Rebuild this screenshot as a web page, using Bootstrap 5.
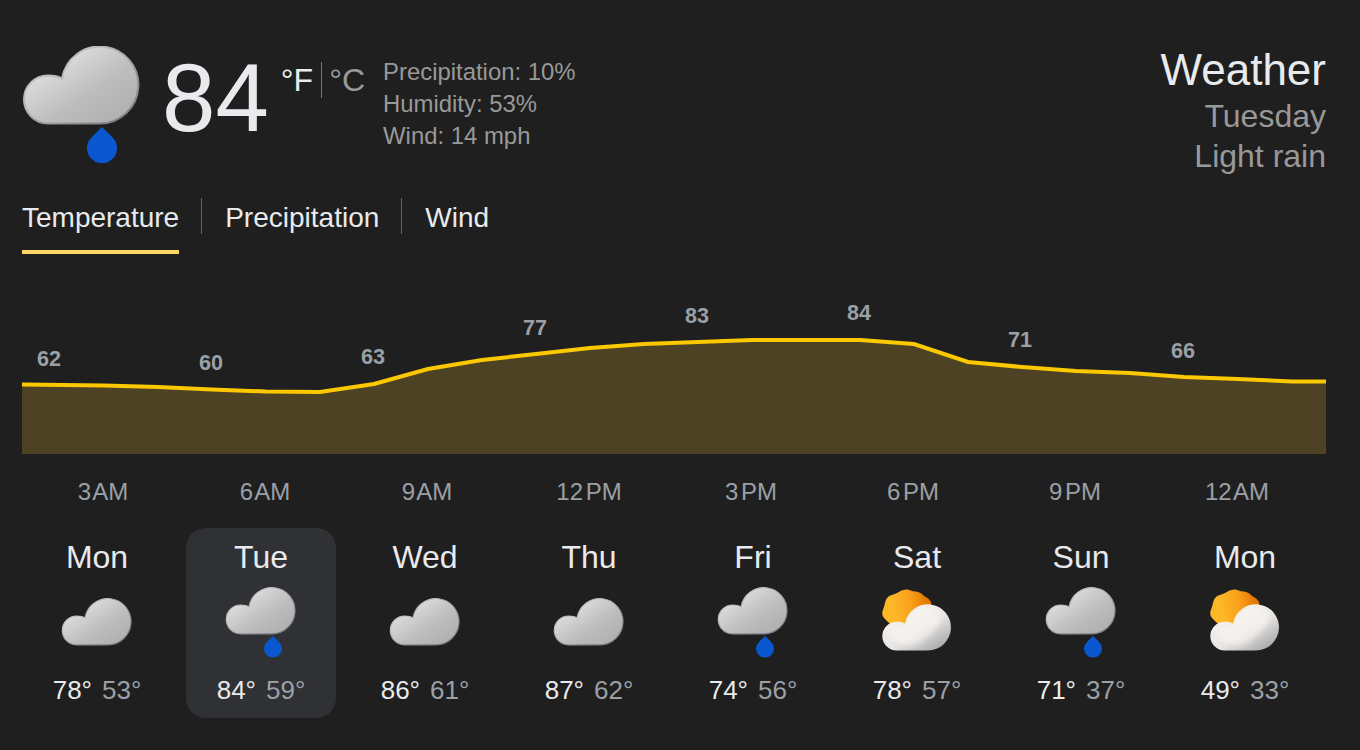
<!DOCTYPE html>
<html lang="en">
<head>
<meta charset="utf-8">
<title>Weather</title>
<link href="https://cdn.jsdelivr.net/npm/bootstrap@5.3.0/dist/css/bootstrap.min.css" rel="stylesheet">
<style>
html,body{height:100%;}
body{background:#1f1f1f;color:#e8eaed;font-family:"Liberation Sans",Arial,sans-serif;overflow:hidden;}
.wx-page{width:1360px;height:750px;padding:46px 34px 0 22px;}
.wx-head{height:116px;}
.wx-bigicon{width:118px;height:118px;display:block;flex:none;}
.wx-now{font-size:96px;line-height:102px;margin:1px 12px 0 22px;color:#e8eaed;height:102px;}
.wx-units{font-size:32px;line-height:36px;margin-top:16px;height:36px;}
.wx-units .wx-f{color:#e8eaed;padding-right:8px;border-right:1px solid #70757a;}
.wx-units .wx-c{color:#999;padding-left:7px;}
.wx-details{font-size:23.9px;line-height:32px;color:#999;margin:10px 0 0 18px;}
.wx-title{font-size:44px;line-height:48px;color:#e8eaed;margin:0;font-weight:400;}
.wx-sub{font-size:32px;line-height:40px;color:#999;}
.wx-sub1{margin-top:2px;}
.wx-tabs{margin-top:36px;height:56px;}
.wx-tab{font-size:28px;line-height:36px;color:#e8eaed;padding:2px 0 14px;text-decoration:none;border-bottom:4px solid transparent;height:56px;display:block;}
.wx-tab.wx-on{border-bottom-color:#fdd663;color:#e8eaed;}
.wx-tab:hover{color:#fff;}
.wx-sep{width:1px;height:36px;background:#5f6368;margin:0 23px 0 22px;}
.wx-chart{display:block;width:1304px;height:164px;margin-top:36px;}
.wx-chart text{font-family:"Liberation Sans",Arial,sans-serif;font-size:21.6px;font-weight:700;fill:#9aa0a6;text-anchor:middle;}
.wx-hours{margin-top:24px;height:28px;}
.wx-hour{width:162px;flex:none;text-align:center;font-size:24px;line-height:28px;color:#9aa0a6;word-spacing:-4px;}
.wx-days{margin-top:22px;gap:14px;}
.wx-day{width:150px;height:190px;flex:none;border-radius:20px;padding-top:12px;text-align:center;}
.wx-day.wx-sel{background:#303134;}
.wx-dname{font-size:32px;line-height:34px;color:#e8eaed;height:34px;}
.wx-dicon{display:block;width:80px;height:80px;margin:8px auto 0;}
.wx-temps{font-size:26px;line-height:30px;margin-top:13px;color:#e8eaed;}
.wx-temps span+span{color:#9aa0a6;margin-left:10px;}
</style>
</head>
<body>
<svg width="0" height="0" class="position-absolute">
<defs>
<linearGradient id="gCloud" x1="0.1" y1="0.1" x2="0.85" y2="0.85"><stop offset="0" stop-color="#e9e9e9"/><stop offset="0.65" stop-color="#bdbdbd"/><stop offset="1" stop-color="#b2b2b2"/></linearGradient>
<linearGradient id="gEdge" x1="0.3" y1="0.3" x2="0.9" y2="0.9"><stop offset="0" stop-color="#bdbdbd"/><stop offset="0.5" stop-color="#9b9da0"/><stop offset="1" stop-color="#7b7f83"/></linearGradient>
<linearGradient id="gWhite" x1="0.1" y1="0.1" x2="0.9" y2="0.95"><stop offset="0" stop-color="#f8f5f2"/><stop offset="0.55" stop-color="#e8e6e4"/><stop offset="1" stop-color="#a3a5a8"/></linearGradient>
<linearGradient id="gSun" x1="0.2" y1="0.4" x2="0.9" y2="0.3"><stop offset="0" stop-color="#fdb827"/><stop offset="0.55" stop-color="#f9a11b"/><stop offset="1" stop-color="#e57a00"/></linearGradient>
<filter id="fSoft" x="-20%" y="-20%" width="140%" height="140%"><feGaussianBlur stdDeviation="4"/></filter>
<symbol id="iCloud" viewBox="0 0 116 78" overflow="visible">
<path d="M24 77.5A24 24 0 0 1 24 29.5C29 29.5 34 30 38 32.5A38.5 38.5 0 1 1 76 77.5Z" fill="url(#gCloud)" stroke="url(#gEdge)" stroke-width="2"/>
</symbol>
<symbol id="iDrop" viewBox="0 0 30 36"><path d="M15 0L25.6 10.6A15 15 0 1 1 4.4 10.6Z" fill="#0b57d0"/></symbol>
<clipPath id="cWhite"><path d="M24 77.5A24 24 0 0 1 24 29.5C29 29.5 34 30 38 32.5A38.5 38.5 0 1 1 76 77.5Z"/></clipPath>
<symbol id="iCloudWhite" viewBox="0 0 116 78" overflow="visible">
<path d="M24 77.5A24 24 0 0 1 24 29.5C29 29.5 34 30 38 32.5A38.5 38.5 0 1 1 76 77.5Z" fill="url(#gWhite)"/>
<g clip-path="url(#cWhite)"><path d="M12 50C18 38 30 34 38 36C44 18 58 4 76 2C88 4 97 14 98 24C94 40 76 52 62 66C44 72 20 66 12 50Z" fill="#fbf6f0" opacity=".6" filter="url(#fSoft)"/></g>
</symbol>
<symbol id="iSunCloud" viewBox="0 0 80 80">
<path d="M29 7.5C32 7.2 35 9.5 38 9.5C41 9.5 44 11 46 13C48 15 52 16 54 20C55 23 53 26 52.5 29L20 46C17 44.5 13.5 42.5 11 40C8.5 37.5 5.5 35 5.2 32C4.9 29 7 26 7.5 23C8 20 9 16.5 11.5 14.5C14 12.5 17 13 20 11C23 9 26 7.8 29 7.5Z" fill="url(#gSun)"/>
<use href="#iCloudWhite" x="5.3" y="22" width="69.6" height="46.8"/>
</symbol>
</defs>
</svg>
<main class="wx-page">
<header class="wx-head d-flex justify-content-between">
<div class="d-flex align-items-start">
<svg class="wx-bigicon" viewBox="-2 0 118 118" role="img" aria-label="Light rain">
<use href="#iCloud" x="0" y="0" width="116" height="78"/>
<use href="#iDrop" x="63" y="81" width="30" height="36"/>
</svg>
<div class="wx-now">84</div>
<div class="wx-units d-flex"><span class="wx-f">°F</span><span class="wx-c">°C</span></div>
<div class="wx-details">
<div>Precipitation: 10%</div>
<div>Humidity: 53%</div>
<div>Wind: 14 mph</div>
</div>
</div>
<div class="text-end">
<h1 class="wx-title">Weather</h1>
<div class="wx-sub wx-sub1">Tuesday</div>
<div class="wx-sub">Light rain</div>
</div>
</header>
<nav class="wx-tabs d-flex align-items-start">
<a class="wx-tab wx-on" href="#">Temperature</a>
<span class="wx-sep"></span>
<a class="wx-tab" href="#">Precipitation</a>
<span class="wx-sep"></span>
<a class="wx-tab" href="#">Wind</a>
</nav>
<svg class="wx-chart" viewBox="22 290 1304 164">
<path d="M22 384.5L104 385.5L158 387L212 389.5L266 391.5L320 392L374 384L428 369L482 360L536 354L590 348L644 344L698 342L752 340L806 340L860 340L914 344L968 362L1022 367L1076 371L1130 373L1184 377L1238 379L1292 381.5L1326 381.5V454H22Z" fill="#4e4224"/>
<path d="M22 384.5L104 385.5L158 387L212 389.5L266 391.5L320 392L374 384L428 369L482 360L536 354L590 348L644 344L698 342L752 340L806 340L860 340L914 344L968 362L1022 367L1076 371L1130 373L1184 377L1238 379L1292 381.5L1326 381.5" fill="none" stroke="#fcc800" stroke-width="4"/>
<text x="49" y="366">62</text><text x="211" y="370">60</text><text x="373" y="364">63</text><text x="535" y="335">77</text><text x="697" y="323">83</text><text x="859" y="320">84</text><text x="1020" y="347">71</text><text x="1183" y="358">66</text>
</svg>
<div class="wx-hours d-flex">
<div class="wx-hour">3 AM</div><div class="wx-hour">6 AM</div><div class="wx-hour">9 AM</div><div class="wx-hour">12 PM</div><div class="wx-hour">3 PM</div><div class="wx-hour">6 PM</div><div class="wx-hour">9 PM</div><div class="wx-hour">12 AM</div>
</div>
<section class="wx-days d-flex">
<div class="wx-day"><div class="wx-dname">Mon</div><svg class="wx-dicon" viewBox="0 0 80 80"><use href="#iCloud" x="5.3" y="16.3" width="69.6" height="46.8"/></svg><div class="wx-temps"><span>78°</span><span>53°</span></div></div>
<div class="wx-day wx-sel"><div class="wx-dname">Tue</div><svg class="wx-dicon" viewBox="0 0 80 80"><use href="#iCloud" x="5.3" y="5.3" width="69.6" height="46.8"/><use href="#iDrop" x="43" y="54" width="18" height="21.6"/></svg><div class="wx-temps"><span>84°</span><span>59°</span></div></div>
<div class="wx-day"><div class="wx-dname">Wed</div><svg class="wx-dicon" viewBox="0 0 80 80"><use href="#iCloud" x="5.3" y="16.3" width="69.6" height="46.8"/></svg><div class="wx-temps"><span>86°</span><span>61°</span></div></div>
<div class="wx-day"><div class="wx-dname">Thu</div><svg class="wx-dicon" viewBox="0 0 80 80"><use href="#iCloud" x="5.3" y="16.3" width="69.6" height="46.8"/></svg><div class="wx-temps"><span>87°</span><span>62°</span></div></div>
<div class="wx-day"><div class="wx-dname">Fri</div><svg class="wx-dicon" viewBox="0 0 80 80"><use href="#iCloud" x="5.3" y="5.3" width="69.6" height="46.8"/><use href="#iDrop" x="43" y="54" width="18" height="21.6"/></svg><div class="wx-temps"><span>74°</span><span>56°</span></div></div>
<div class="wx-day"><div class="wx-dname">Sat</div><svg class="wx-dicon" viewBox="0 0 80 80"><use href="#iSunCloud"/></svg><div class="wx-temps"><span>78°</span><span>57°</span></div></div>
<div class="wx-day"><div class="wx-dname">Sun</div><svg class="wx-dicon" viewBox="0 0 80 80"><use href="#iCloud" x="5.3" y="5.3" width="69.6" height="46.8"/><use href="#iDrop" x="43" y="54" width="18" height="21.6"/></svg><div class="wx-temps"><span>71°</span><span>37°</span></div></div>
<div class="wx-day"><div class="wx-dname">Mon</div><svg class="wx-dicon" viewBox="0 0 80 80"><use href="#iSunCloud"/></svg><div class="wx-temps"><span>49°</span><span>33°</span></div></div>
</section>
</main>
<script src="https://cdn.jsdelivr.net/npm/bootstrap@5.3.0/dist/js/bootstrap.bundle.min.js"></script>
</body>
</html>
